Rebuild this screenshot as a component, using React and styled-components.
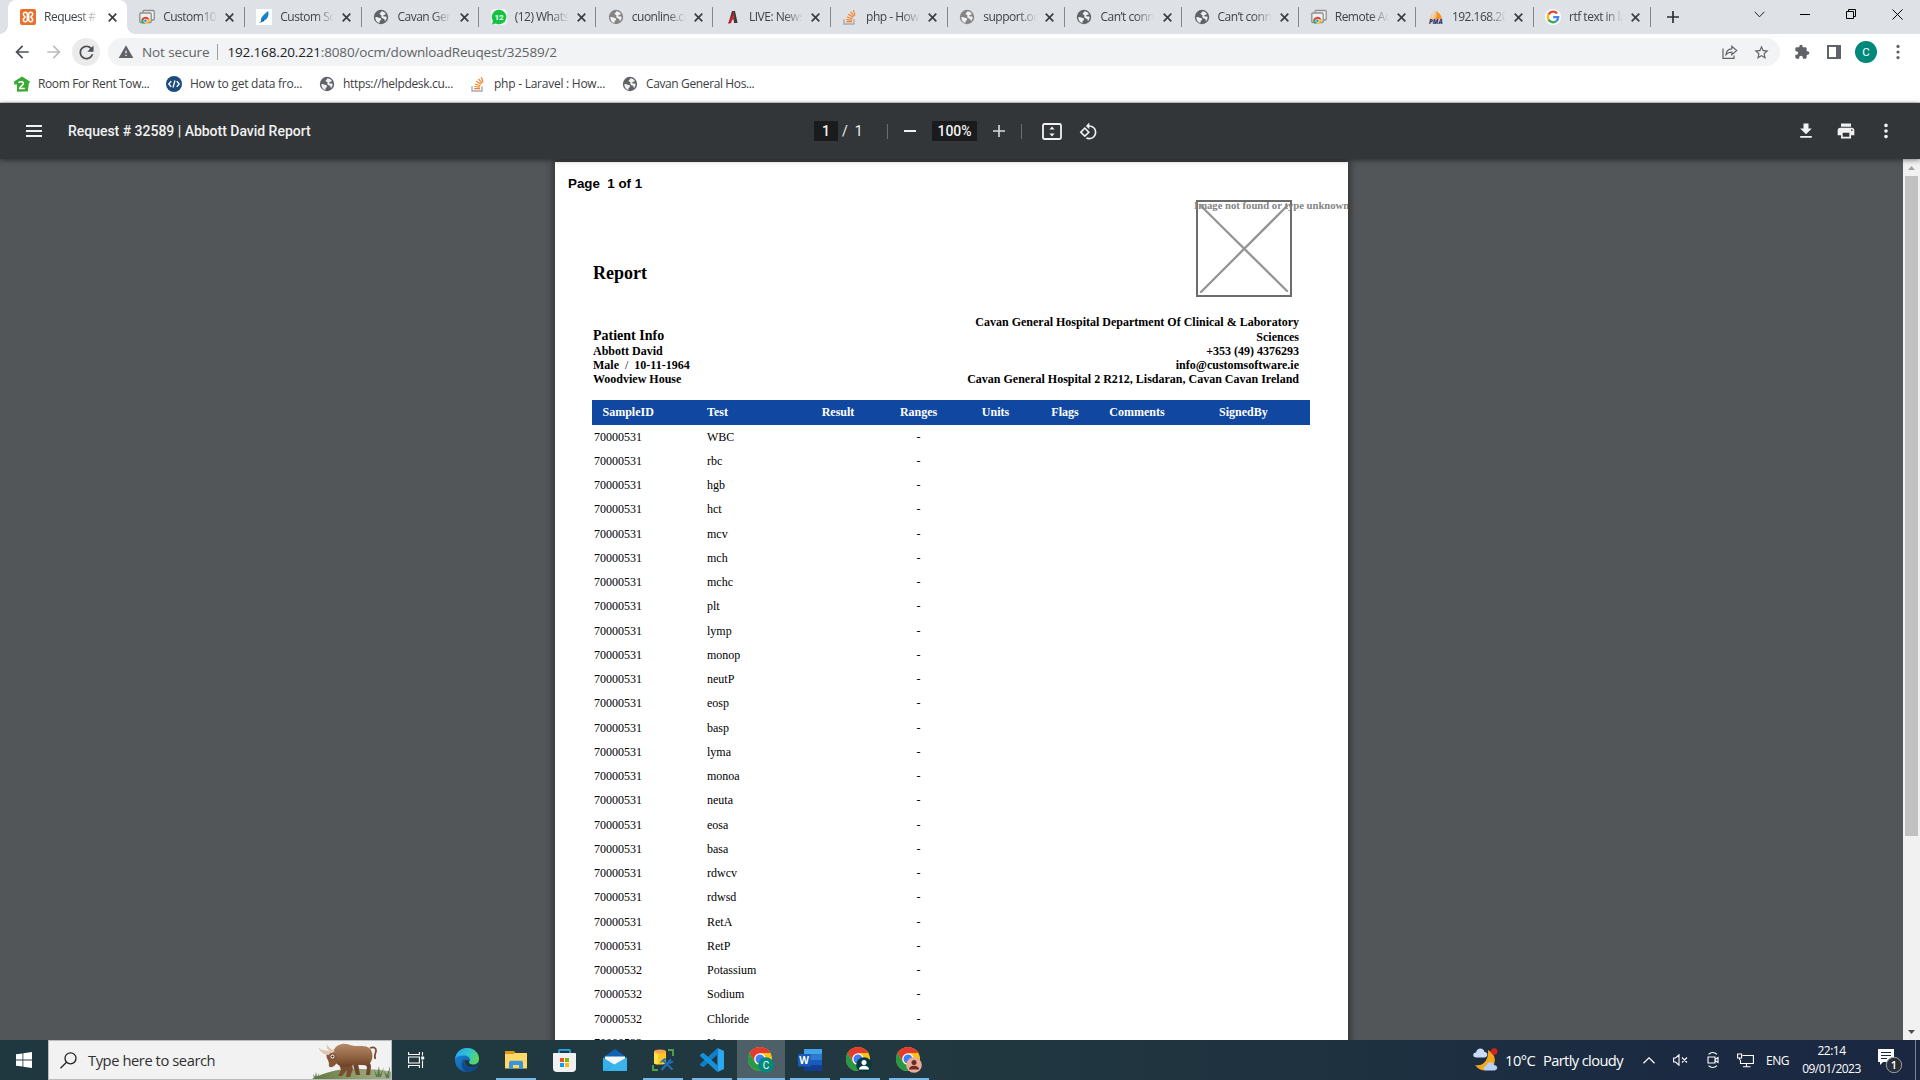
import React from "react";
import styled, { createGlobalStyle, css } from "styled-components";

const Global = createGlobalStyle`
  * { box-sizing: border-box; }
  html, body { margin: 0; padding: 0; overflow: hidden; background: #525659; }
  svg { display: block; flex: none; }
`;

const ui = `"Open Sans", "Noto Sans", sans-serif`;
const serif = `"Liberation Serif", "Times New Roman", serif`;

const Screen = styled.div`
  width: 1920px;
  height: 1080px;
  display: flex;
  flex-direction: column;
  overflow: hidden;
  font-family: ${ui};
`;

/* ---------- browser chrome ---------- */
const TabStrip = styled.div`
  height: 34px;
  flex: none;
  display: flex;
  background: #dee1e6;
  padding-left: 10px;
`;

const Tab = styled.div`
  position: relative;
  width: 117.17px;
  flex: none;
  display: flex;
  align-items: center;
  padding-left: 12px;
  &::after {
    content: "";
    position: absolute;
    right: -0.5px;
    top: 7px;
    width: 1px;
    height: 20px;
    background: ${(p) => (p.$active ? "transparent" : "#84878b")};
  }
  ${(p) =>
    p.$active &&
    css`
      background: #fff;
      border-radius: 8px 8px 0 0;
      margin-left: -2px;
      width: 119.17px;
      &::before {
        content: "";
        position: absolute;
        left: -8px;
        right: -8px;
        bottom: 0;
        height: 8px;
        background: radial-gradient(circle at 0 0, transparent 7.5px, #fff 8px) left / 8px 8px no-repeat,
          radial-gradient(circle at 100% 0, transparent 7.5px, #fff 8px) right / 8px 8px no-repeat;
      }
    `}
`;

const TabTitle = styled.div`
  width: 54px;
  margin-left: 8px;
  overflow: hidden;
  white-space: nowrap;
  font-size: 12px;
  line-height: 18px;
  letter-spacing: -0.5px;
  color: #3f4347;
  -webkit-mask-image: linear-gradient(90deg, #000 66%, transparent 100%);
  mask-image: linear-gradient(90deg, #000 66%, transparent 100%);
`;

const TabClose = styled.div`
  width: 16px;
  margin-left: ${(p) => (p.$active ? 6 : 4.6)}px;
  display: flex;
  justify-content: center;
`;

const NewTab = styled.div`
  width: 46px;
  display: flex;
  align-items: center;
  justify-content: center;
`;

const WindowButtons = styled.div`
  margin-left: auto;
  display: flex;
  height: 28px;
  align-items: center;
`;

const WindowButton = styled.div`
  width: 46px;
  display: flex;
  justify-content: center;
`;

const AddressRow = styled.div`
  height: 36px;
  flex: none;
  display: flex;
  align-items: center;
  background: #fff;
  padding: 0 6px 0 6px;
`;

const NavButton = styled.div`
  width: 32px;
  height: 28px;
  display: flex;
  align-items: center;
  justify-content: center;
`;

const ReloadButton = styled(NavButton)`
  width: 28px;
  margin-left: 2px;
  border-radius: 50%;
  background: #ebebec;
`;

const Omnibox = styled.div`
  width: 1672px;
  flex: none;
  height: 28px;
  margin-left: 8px;
  border-radius: 14px;
  background: #f1f3f4;
  display: flex;
  align-items: center;
  padding: 0 10px;
  color: #5f6368;
  font-size: 13.5px;
  white-space: nowrap;
`;

const NotSecure = styled.span`
  margin-left: 8px;
  width: 67px;
  letter-spacing: -0.1px;
`;

const Divider = styled.span`
  width: 1px;
  height: 16px;
  margin: 0 9.5px 0 8px;
  background: #9b9ea2;
`;

const Url = styled.span`
  letter-spacing: -0.16px;
  b {
    font-weight: 400;
    color: #202124;
  }
`;

const OmniActions = styled.div`
  margin-left: auto;
  display: flex;
  align-items: center;
  gap: 15px;
`;

const ToolActions = styled.div`
  margin-left: auto;
  display: flex;
  align-items: center;
`;

const ToolSlot = styled.div`
  width: 32px;
  display: flex;
  justify-content: center;
`;

const Avatar = styled.div`
  width: 22px;
  height: 22px;
  border-radius: 50%;
  background: #00897b;
  color: #fff;
  font: 400 11.5px/22px Roboto, sans-serif;
  text-align: center;
`;

const BookmarkBar = styled.div`
  height: 33px;
  flex: none;
  display: flex;
  align-items: center;
  background: #fff;
  border-bottom: 1px solid #d5d7d9;
  padding: 0 0 5px 14px;
`;

const Bookmark = styled.div`
  width: ${(p) => p.$w}px;
  display: flex;
  align-items: center;
  gap: 8px;
  font-size: 12px;
  letter-spacing: ${(p) => p.$ls}px;
  color: #3c4043;
  white-space: nowrap;
`;

/* ---------- pdf viewer ---------- */
const PdfToolbar = styled.div`
  position: relative;
  z-index: 2;
  height: 56px;
  flex: none;
  display: grid;
  grid-template-columns: 814px 1fr auto;
  align-items: center;
  background: #323639;
  color: #f1f1f1;
  box-shadow: 0 1px 5px rgba(0, 0, 0, 0.5);
  font: 500 14px/20px Roboto, sans-serif;
`;

const PdfTitle = styled.div`
  display: flex;
  align-items: center;
  padding-left: 26px;
  gap: 26px;
  letter-spacing: -0.02px;
`;

const PdfControls = styled.div`
  display: flex;
  align-items: center;
`;

const DarkField = styled.div`
  width: ${(p) => p.$w}px;
  height: 20px;
  background: #191b1c;
  text-align: center;
  letter-spacing: -0.1px;
`;

const PageTotal = styled.div`
  width: 49px;
  padding-left: 4px;
  font-weight: 400;
  word-spacing: 3.6px;
`;

const PdfDivider = styled.div`
  width: 1px;
  height: 15px;
  background: #6b6e70;
`;

const PdfSlot = styled.div`
  width: ${(p) => p.$w}px;
  display: flex;
  justify-content: center;
`;

const PdfActions = styled.div`
  display: flex;
  align-items: center;
  padding-right: 14px;
`;

const Viewer = styled.div`
  flex: 1;
  min-height: 0;
  display: flex;
  background: #525659;
`;

const Canvas = styled.div`
  flex: 1;
  padding: 3px 0 0 555px;
  overflow: hidden;
`;

const Sheet = styled.div`
  width: 793px;
  height: 1120px;
  background: #fff;
  box-shadow: 0 0 7px 2px rgba(0, 0, 0, 0.42);
  padding: 14px 38px 0 37px;
  overflow: hidden;
  font-family: ${serif};
  color: #000;
`;

const PageNumber = styled.div`
  margin-left: -24px;
  font: bold 13.33px/16px "Liberation Sans", Arial, sans-serif;
  white-space: pre;
`;

const BrandRow = styled.div`
  display: flex;
  justify-content: space-between;
  height: 97px;
  margin-top: 8px;
  padding: 0 18px 0 1px;
`;

const ReportTitle = styled.div`
  padding-top: 63px;
  font-size: 18px;
  line-height: 20px;
  font-weight: bold;
`;

const MissingImage = styled.div`
  position: relative;
  width: 96px;
  height: 97px;
`;

const MissingLabel = styled.div`
  position: absolute;
  left: -2px;
  top: 0;
  font-size: 10.67px;
  line-height: 11px;
  font-weight: bold;
  color: #858585;
  white-space: nowrap;
`;

const InfoRow = styled.div`
  display: flex;
  justify-content: space-between;
  align-items: flex-end;
  margin: 18px 0 14px;
  padding: 0 11px 0 1px;
`;

const InfoBlock = styled.div`
  text-align: ${(p) => p.$align || "left"};
  font-weight: bold;
`;

const InfoHeading = styled.div`
  font-size: 14px;
  line-height: 16px;
`;

const InfoLine = styled.div`
  font-size: 12px;
  line-height: ${(p) => p.$lh || 14}px;
  white-space: pre;
  i {
    font-style: normal;
    font-weight: 400;
  }
`;

const columns = `115px 90px 82px 79.2px 74.6px 64.4px 79.6px 133.2px`;

const TableHead = styled.div`
  width: 718px;
  height: 25px;
  margin-bottom: -0.5px;
  display: grid;
  grid-template-columns: ${columns};
  align-items: center;
  background: #0f47a1;
  color: #fff;
  font-size: 12px;
  font-weight: bold;
`;

const TableRow = styled.div`
  width: 718px;
  height: 24.25px;
  display: grid;
  grid-template-columns: ${columns};
  line-height: 24.25px;
  font-size: 12px;
`;

const Cell = styled.div`
  text-align: ${(p) => (p.$left === undefined ? "center" : "left")};
  padding-left: ${(p) => p.$left || 0}px;
`;

const Scrollbar = styled.div`
  width: 17px;
  display: flex;
  flex-direction: column;
  align-items: center;
  background: #f1f1f1;
`;

const ScrollArrow = styled.div`
  height: 17px;
  display: flex;
  align-items: center;
`;

const Thumb = styled.div`
  width: 13px;
  height: 660px;
  margin-bottom: auto;
  background: #c1c1c1;
`;

/* ---------- taskbar ---------- */
const Taskbar = styled.div`
  height: 40px;
  flex: none;
  display: flex;
  background: linear-gradient(90deg, #1f3840 0%, #213840 48%, #1e323f 68%, #1b2b42 84%, #1b2741 100%);
  color: #fff;
`;

const Start = styled.div`
  width: 48px;
  display: flex;
  align-items: center;
  justify-content: center;
`;

const SearchBox = styled.div`
  width: 344px;
  border: 1px solid #b9bcbd;
  background: #f2f2f2;
  display: flex;
  align-items: center;
  overflow: hidden;
  color: #303030;
  font-size: 14.7px;
  padding-left: 11px;
`;

const SearchHint = styled.div`
  margin-left: 11px;
  width: 225px;
  letter-spacing: -0.42px;
  white-space: nowrap;
`;

const TaskButton = styled.div`
  width: ${(p) => p.$w}px;
  height: 40px;
  display: flex;
  align-items: center;
  justify-content: center;
  background: ${(p) =>
    p.$active
      ? "linear-gradient(#76b9ed, #76b9ed) bottom / 48px 2px no-repeat, #4d6068"
      : p.$open
      ? "linear-gradient(#76b9ed, #76b9ed) bottom / 40px 2px no-repeat"
      : "none"};
`;

const Tray = styled.div`
  margin-left: auto;
  display: flex;
  align-items: center;
  font-size: 14.7px;
`;

const TraySlot = styled.div`
  width: ${(p) => p.$w}px;
  display: flex;
  justify-content: center;
  white-space: nowrap;
`;

const Weather = styled.div`
  display: flex;
  align-items: center;
  width: 159px;
  white-space: nowrap;
`;

const Temp = styled.span`
  width: 38px;
  margin-left: 7px;
  letter-spacing: -0.5px;
`;

const Sky = styled.span`
  letter-spacing: -0.63px;
`;

const Lang = styled.div`
  width: 35px;
  font-size: 12px;
  text-align: center;
  letter-spacing: -0.5px;
`;

const Clock = styled.div`
  width: 72px;
  padding-left: 1px;
  font-size: 12px;
  line-height: 18px;
  text-align: center;
  letter-spacing: -0.5px;
`;

const DesktopEdge = styled.div`
  width: 5px;
  height: 40px;
  border-left: 1px solid #7b8494;
`;

/* ---------- drawings ---------- */
const Glyph = ({ d, size = 20, color = "#5f6368" }) => (
  <svg width={size} height={size} viewBox="0 0 24 24" fill={color}>
    <path d={d} />
  </svg>
);

const paths = {
  back: "M20 11H7.83l5.59-5.59L12 4l-8 8 8 8 1.41-1.41L7.83 13H20v-2z",
  forward: "M12 4l-1.41 1.41L16.17 11H4v2h12.17l-5.58 5.59L12 20l8-8z",
  reload:
    "M17.65 6.35C16.2 4.9 14.21 4 12 4c-4.42 0-7.99 3.58-7.99 8s3.57 8 7.99 8c3.73 0 6.84-2.55 7.73-6h-2.08c-.82 2.33-3.04 4-5.65 4-3.31 0-6-2.69-6-6s2.69-6 6-6c1.66 0 3.14.69 4.22 1.78L13 11h7V4l-2.35 2.35z",
  warning: "M1 21h22L12 2 1 21zm12-3h-2v-2h2v2zm0-4h-2v-4h2v4z",
  puzzle:
    "M20.5 11H19V7c0-1.1-.9-2-2-2h-4V3.5C13 2.12 11.88 1 10.5 1S8 2.12 8 3.5V5H4c-1.1 0-1.99.9-1.99 2v3.8H3.5c1.49 0 2.7 1.21 2.7 2.7s-1.21 2.7-2.7 2.7H2V20c0 1.1.9 2 2 2h3.8v-1.5c0-1.49 1.21-2.7 2.7-2.7 1.49 0 2.7 1.21 2.7 2.7V22H17c1.1 0 2-.9 2-2v-4h1.5c1.38 0 2.5-1.12 2.5-2.5S21.88 11 20.5 11z",
  star:
    "M22 9.24l-7.19-.62L12 2 9.19 8.63 2 9.24l5.46 4.73L5.82 21 12 17.27 18.18 21l-1.63-7.03L22 9.24zM12 15.4l-3.76 2.27 1-4.28-3.32-2.88 4.38-.38L12 6.1l1.71 4.04 4.38.38-3.32 2.88 1 4.28L12 15.4z",
  print:
    "M19 8H5c-1.66 0-3 1.34-3 3v6h4v4h12v-4h4v-6c0-1.66-1.34-3-3-3zm-3 11H8v-5h8v5zm3-7c-.55 0-1-.45-1-1s.45-1 1-1 1 .45 1 1-.45 1-1 1zm-1-9H6v4h12V3z",
  download: "M19 9h-4V3H9v6H5l7 7 7-7zM5 18v2h14v-2H5z",
  rotate:
    "M7.34 6.41L.86 12.9l6.49 6.48 6.49-6.48-6.5-6.49zM3.69 12.9l3.66-3.66L11 12.9l-3.66 3.66-3.65-3.66zm15.67-6.26C17.61 4.88 15.3 4 13 4V.76L8.76 5 13 9.24V6c1.79 0 3.58.68 4.95 2.05 2.73 2.73 2.73 7.17 0 9.9C16.58 19.32 14.79 20 13 20c-.97 0-1.94-.21-2.84-.61l-1.49 1.49C10.02 21.62 11.51 22 13 22c2.3 0 4.61-.88 6.36-2.64 3.52-3.51 3.52-9.21 0-12.72z",
};

const Dots = ({ color, r = 1.6 }) => (
  <svg width="6" height="16" fill={color}>
    <circle cx="3" cy="2.4" r={r} />
    <circle cx="3" cy="8" r={r} />
    <circle cx="3" cy="13.6" r={r} />
  </svg>
);

const Globe = ({ color = "#5f6368" }) => (
  <svg width="16" height="16" viewBox="0 0 16 16">
    <circle cx="8" cy="8" r="7.2" fill={color} />
    <path
      d="M2.3 8.2c1.4-.3 2.5.2 3.6.6 1.2.3 2.3.5 2.2 1.6-.1.9-1.3.9-1.5 1.8-.1.6 0 1.2-.3 1.7C3.9 13.2 2.3 11 2.3 8.2zM8.3 2.2c1.8.1 3.6 1 4.6 2.7-.8.9-1.9.6-2.5 1.3-.5.6.2 1.3 1 1.4.9.1 1.7-.2 2.2.4.1 1.6-.6 3.2-1.7 4.2-.3-1-.1-2-1-2.500-.8-.5-1.9-.3-2.4-1.3-.4-1 .3-1.800-.3-2.400-.6-.5-1.500-.2-1.600-1-.1-1.100 1.700-1.200 1.700-2.800z"
      fill="#fff"
      opacity=".9"
    />
  </svg>
);

const Xampp = () => (
  <svg width="16" height="16" viewBox="0 0 16 16">
    <rect width="16" height="16" rx="2" fill="#e8702a" />
    <path
      d="M5.3 3.3a2 2 0 0 0-1 3.7c1 .4 1 1.6 0 2a2 2 0 1 0 3 1.700V8.600h1.400v2.100a2 2 0 1 0 3-1.700c-1-.4-1-1.600 0-2a2 2 0 1 0-3-1.700v2.100H7.300V5.300a2 2 0 0 0-2-2z"
      fill="none"
      stroke="#fff"
      strokeWidth="1.500"
    />
  </svg>
);

const RemoteDesk = () => (
  <svg width="16" height="16" viewBox="0 0 16 16">
    <rect x="4" y="1.5" width="11.2" height="9.5" rx="1" fill="#f5f5f5" stroke="#8d8d8d" strokeWidth="1.3" />
    <rect x=".8" y="4" width="11.4" height="9.5" rx="1" fill="#eee" stroke="#8d8d8d" strokeWidth="1.3" />
    <path d="M2.2 12a4.2 4.2 0 0 1 8.2-1.2H6.500z" fill="#e33b2e" />
    <path d="M2.3 11.5l1.8-1.8 2.4 4.8H3.2a4 4 0 0 1-.9-3z" fill="#35a853" />
    <path d="M6.5 10.2h4.2a4.5 4.5 0 0 1-2.2 4.4H6z" fill="#fbbc05" />
    <circle cx="6.4" cy="11.8" r="1.7" fill="#4285f4" stroke="#fff" strokeWidth=".7" />
  </svg>
);

const Feather = () => (
  <svg width="16" height="16" viewBox="0 0 16 16">
    <rect width="16" height="16" fill="#fff" />
    <path d="M12.2 2c1 4.500-.4 8-4 9.300L5 12c-.6-4 3-6.300 7.200-10z" fill="#1583c9" />
    <path d="M7.500 10l-4.500 4 5.500-2z" fill="#155e9c" />
  </svg>
);

const WhatsApp = () => (
  <svg width="16" height="16" viewBox="0 0 16 16">
    <rect width="16" height="16" rx="4" fill="#f3f6f3" />
    <path d="M8 .8a7.2 7.2 0 1 1-3.2 13.6L1 15.4l1-3.5A7.2 7.2 0 0 1 8 .8z" fill="#11c243" />
    <text x="8" y="11" fontSize="8" fontWeight="700" fontFamily="Roboto, sans-serif" textAnchor="middle" fill="#fff">
      12
    </text>
  </svg>
);

const RedA = () => (
  <svg width="16" height="16" viewBox="0 0 16 16">
    <path d="M7 2h3l2.600 12H9L8.300 6 6 14H3.500z" fill="#3b3b3f" />
    <path d="M9.400 1.500L3 14.500h2.300l2-4 2 .2V8.600H8.200z" fill="#d71920" />
  </svg>
);

const StackOverflow = () => (
  <svg width="16" height="16" viewBox="0 0 16 16" fill="none">
    <path d="M2 10.3v4.7h10v-4.7" stroke="#a9abae" strokeWidth="1.4" />
    <path
      d="M4.2 12.7h5.8M4.3 10.5l5.7.7M4.9 8l5.5 1.7M6.3 5.2l4.8 3M8.5 2.8l3.6 4.5M11.4 1.2l1.6 5.3"
      stroke="#f48024"
      strokeWidth="1.2"
    />
  </svg>
);

const PhpMyAdmin = () => (
  <svg width="16" height="16" viewBox="0 0 17 16">
    <path d="M4.5 2c.8 2.8.4 5.6-1.8 8H1C3 7.6 4.3 5 4.500 2zM7 1c2.500 2.500 2.300 6.200.4 9H3.500C6 7.300 7.200 4.300 7 1z" fill="#f9c385" />
    <path d="M8.500 1.500c4 1.700 5.600 5.300 6.500 8.700H7.500c1.700-2.700 2-5.600 1-8.700z" fill="#f7941d" />
    <text x="8.3" y="15.6" fontSize="6.6" fontWeight="800" fontStyle="italic" fontFamily="Open Sans, sans-serif" textAnchor="middle" fill="#34346b">
      PMA
    </text>
  </svg>
);

const Google = () => (
  <svg width="16" height="16" viewBox="0 0 16 16">
    <circle cx="8" cy="8" r="8" fill="#fff" />
    <g fill="none" strokeWidth="2.3">
      <path d="M12.1 4.6A5.2 5.2 0 0 0 3.5 5.4" stroke="#ea4335" />
      <path d="M3.5 5.4a5.2 5.2 0 0 0 0 5.2" stroke="#fbbc05" />
      <path d="M3.5 10.6a5.2 5.2 0 0 0 7.9 1.5" stroke="#34a853" />
      <path d="M11.4 12.1A5 5 0 0 0 13.2 8.2H8.2" stroke="#4285f4" />
    </g>
  </svg>
);

const HouseMark = () => (
  <svg width="16" height="16" viewBox="0 0 16 16">
    <path d="M8 .5L16 5.500l-1.200 2.300-1 7.700H9.500l-6.500.2V8.500L.3 8.600 0 5.500z" fill="#3aa935" />
    <path d="M4.500 6.800c2-1.800 5.200-1.200 4.800 1-.3 1.700-3 2.100-3.500 4.700h5" fill="none" stroke="#fff" strokeWidth="1.500" />
  </svg>
);

const CodeMark = () => (
  <svg width="16" height="16" viewBox="0 0 16 16">
    <circle cx="8" cy="8" r="8" fill="#1d4b7d" />
    <path d="M5.3 5.3L2.700 8l2.600 2.700M10.700 5.300L13.300 8l-2.600 2.700M9 4.500L7 11.500" fill="none" stroke="#fff" strokeWidth="1.3" />
  </svg>
);

const Cross = () => (
  <svg width="9" height="9" viewBox="0 0 9 9">
    <path d="M.7.7l7.600 7.600M8.300.7L.7 8.300" stroke="#3c4043" strokeWidth="1.700" />
  </svg>
);

const Share = () => (
  <svg width="16" height="16" viewBox="0 0 16 16" fill="none" stroke="#5f6368" strokeWidth="1.2">
    <path d="M1 4.5v9.9h11v-3" />
    <path d="M4 10.7c.3-3.7 2.3-5.7 5.8-5.9V2.2l4.9 4.3-4.900 4.200V8.100C7.500 8.100 5.500 8.900 4 10.700z" />
  </svg>
);

const SidePanel = () => (
  <svg width="14" height="14" fill="#5f6368">
    <path d="M0 0h14v14H0zM2 2v10h7V2z" fillRule="evenodd" />
  </svg>
);

const FitPage = () => (
  <svg width="20" height="17" viewBox="0 0 20 17">
    <rect x="1" y="1" width="18" height="15" rx="1.5" fill="none" stroke="#f1f1f1" strokeWidth="1.8" />
    <path d="M10 3.6l2.600 3H7.400zM10 13.400l2.600-3H7.400z" fill="#f1f1f1" />
  </svg>
);

const WindowsLogo = () => (
  <svg width="16" height="16" viewBox="0 0 16 16" fill="#fff">
    <path d="M0 2.3L6.500 1.400v6.200H0zM7.300 1.300L16 0v7.600H7.300zM0 8.400h6.500v6.200L0 13.700zM7.300 8.400H16V16l-8.700-1.300z" />
  </svg>
);

const Bull = () => (
  <svg width="79" height="38" viewBox="0 0 79 38">
    <defs>
      <linearGradient id="hill" x1="0" x2="1">
        <stop offset="0" stopColor="#5f7440" />
        <stop offset=".5" stopColor="#8b9c68" />
        <stop offset="1" stopColor="#a2ae8c" />
      </linearGradient>
      <linearGradient id="hide" x1="0" y1="0" x2="0" y2="1">
        <stop offset="0" stopColor="#b58a66" />
        <stop offset=".6" stopColor="#8e6140" />
        <stop offset="1" stopColor="#6b4128" />
      </linearGradient>
    </defs>
    <path d="M0 38C14 30 32 27 50 28c12 0 22 1 30 3v7z" fill="url(#hill)" />
    <path d="M58 7c5-2 7 1 5.500 5-1 3-1.500 4 0 6" fill="none" stroke="#7a4d32" strokeWidth="1.700" />
    <path d="M46 22l2 12h-4l-3-10zM57 19l2 6-1 9h-4l1-8-5-6z" fill="#70452b" />
    <path d="M27 23l2 6-3 6h4l5-6 1-5zM34 23l1 6-1 7h4l3-8-1-5z" fill="#7a4d31" />
    <path d="M18 17c2-6 5-13 12-14 5-1 8 2 13 2 7 0 13-1 16 4 3 6 1 12-3 15-6 1-12-2-18 1-5 2-11 0-13-2z" fill="url(#hide)" />
    <path d="M15 13c4-3 9 0 10 4 1 5-2 8-5 9-2 1-4-1-3-3 0-4-4-7-2-10z" fill="#865637" />
    <path d="M17 14C12 14 8 11 6.500 6.500 10 10 14 9 19 11zM20 12c-4-2-6-5-5-9 1 4 5 5 8 7z" fill="#dfc5b2" />
    <circle cx="20.5" cy="15.5" r="1.9" fill="#fff" />
    <circle cx="20.5" cy="15.5" r="1.1" fill="#222" />
    <path d="M2 38l-1-5 2 3 1-5 1 5 2-4-1 6zM64 36l-2-8 3 6 2-9 1 9 4-8-3 10zM74 37l-2-7 3 4 3-9-1 12z" fill="#5c7a4a" />
  </svg>
);

const TaskView = () => (
  <svg width="17" height="16" viewBox="0 0 17 16" fill="none" stroke="#fff" strokeWidth="1.1">
    <path d="M.6 0v2.500h10.800V0M.6 16v-2.500h10.800V16M.6 5h10.800v6H.6zM14.500 0v3.500M14.500 8.500V16" />
    <rect x="13.2" y="4.5" width="3" height="3" fill="#fff" stroke="none" />
  </svg>
);

const Edge = () => (
  <svg width="24" height="24" viewBox="0 0 24 24">
    <defs>
      <linearGradient id="edgeTop" x1="0" y1=".3" x2="1" y2=".6">
        <stop offset="0" stopColor="#2aa9e8" />
        <stop offset=".5" stopColor="#2fc2d4" />
        <stop offset="1" stopColor="#62d84e" />
      </linearGradient>
      <linearGradient id="edgeLow" x1="0" y1="0" x2="1" y2="1">
        <stop offset="0" stopColor="#1b8ad8" />
        <stop offset="1" stopColor="#0d4e9c" />
      </linearGradient>
    </defs>
    <circle cx="12" cy="12" r="12" fill="url(#edgeLow)" />
    <path d="M.2 10.5C1 4.500 6 0 12 0c7 0 12 5 12 10.500 0 4-3 6-6 6-2.800 0-4-1-4-2 0-.8 1-1.200 1-2.800 0-2.400-2.600-4.300-6-4.300C5 7.400 1.500 8.500.2 10.500z" fill="url(#edgeTop)" />
    <path d="M9.500 10.500C7 15 10.500 19.500 15 19.500c3.500 0 5.500-1 7.300-1.800.6-.2.9.2.5.8A12 12 0 0 1 13 24c-6-.5-8.500-9-3.500-13.500z" fill="#114a8b" />
    <path d="M14.200 12.300c-.5 1-.8 3 1.500 4 3 1.200 6 .3 7.500-1.600l-.4 2.500c-2 1.300-5 2.300-8 2-4-.6-6-4-5.300-7.200z" fill="#203840" />
  </svg>
);

const Explorer = () => (
  <svg width="22" height="18" viewBox="0 0 22 18">
    <path d="M0 0h9l1.500 2H22v5H0z" fill="#d99b13" />
    <path d="M0 3h8.500l1.500-1H22v15.500H0z" fill="#ffd866" />
    <path d="M4 18v-6.500C4 10.300 5 9.800 6 9.800h10c1 0 2 .5 2 1.700V18h-4v-4H8v4z" fill="#3a93dd" />
  </svg>
);

const Store = () => (
  <svg width="23" height="23" viewBox="0 0 23 23">
    <path d="M6 5V1.800C6 1 6.500.8 7.200.8h8.600c.7 0 1.200.2 1.200 1V5" fill="none" stroke="#29a8e8" strokeWidth="1.7" />
    <path d="M0 5c0-.6.3-1 1-1h21c.7 0 1 .4 1 1v14a4 4 0 0 1-4 4H4a4 4 0 0 1-4-4z" fill="#f1f1f2" />
    <path d="M7 9h4v4H7z" fill="#f25022" />
    <path d="M12 9h4v4h-4z" fill="#7fba00" />
    <path d="M7 14h4v4H7z" fill="#00a4ef" />
    <path d="M12 14h4v4h-4z" fill="#ffb900" />
  </svg>
);

const Mail = () => (
  <svg width="24" height="22" viewBox="0 0 24 22">
    <path d="M12 0l12 8.500H0z" fill="#0f61b5" />
    <path d="M2 7.500h20V16H2z" fill="#f3f5f7" />
    <path d="M0 8.500L12 16l12-7.500V22H0z" fill="#33b3ee" />
    <path d="M24 8.500V22H0z" fill="#1f9ae0" />
    <path d="M12 15L24 8.500V22H2z" fill="#50c9f5" opacity=".55" />
  </svg>
);

const Ssms = () => (
  <svg width="22" height="22" viewBox="0 0 22 22">
    <path d="M2 2v12c0 2 12 2 12 0V2z" fill="#ffc91f" />
    <path d="M2 2v12c0 .8 2 1.300 4 1.400V2z" fill="#ffe14d" />
    <ellipse cx="8" cy="2.5" rx="6" ry="2" fill="#f5a54c" />
    <path d="M16 1h5v6M1 16v5h5" fill="none" stroke="#4fa447" strokeWidth="1.9" />
    <path d="M10.500 11l10 9.500M19 10.500l-9.500 10.500" stroke="#1e70b8" strokeWidth="2.2" />
    <path d="M8.500 13.500l4-3.500 1.500 1M21 12.500l-3 1.500-1-3" stroke="#1e70b8" strokeWidth="1.6" fill="none" />
  </svg>
);

const VsCode = () => (
  <svg width="24" height="24" viewBox="0 0 24 24">
    <path d="M17.500 0L24 3v18l-6.500 3z" fill="#2aa9f2" />
    <path d="M17.500 0v6.500L4 18.700 2.500 19 .3 17.200c-.4-.4-.4-1 0-1.400z" fill="#0e7fc8" />
    <path d="M17.500 24v-6.500L4 5.300 2.500 5 .3 6.800c-.4.4-.4 1 0 1.400z" fill="#1592dc" />
  </svg>
);

const Chrome = ({ badge }) => (
  <svg width="27" height="26" viewBox="0 0 27 26">
    <circle cx="12" cy="12" r="12" fill="#fbc116" />
    <path d="M12 0a12 12 0 0 1 10.400 6H12L6.800 15 1.600 6A12 12 0 0 1 12 0z" fill="#e33b2e" />
    <path d="M1.600 6l5.200 9a6 6 0 0 0 5.200 3h5.200L12 24A12 12 0 0 1 1.600 6z" fill="#279847" />
    <circle cx="12" cy="12" r="5.8" fill="#fff" />
    <circle cx="12" cy="12" r="4.5" fill="#3f7ff0" />
    {badge === "C" && (
      <>
        <circle cx="18" cy="18" r="7.8" fill="#00897b" />
        <text x="18" y="21.8" fontSize="10" fontFamily="Roboto, sans-serif" textAnchor="middle" fill="#fff">
          C
        </text>
      </>
    )}
    {badge === "dark" && (
      <>
        <circle cx="18" cy="18" r="7.8" fill="#063a40" />
        <circle cx="18" cy="15.5" r="2.5" fill="#fff" />
        <path d="M13 22.500c0-5 10-5 10 0z" fill="#fff" />
      </>
    )}
    {badge === "pink" && (
      <>
        <circle cx="18" cy="18" r="7.8" fill="#e9ab9b" />
        <circle cx="18" cy="15.5" r="2.5" fill="#6b2c22" />
        <path d="M13 22.500c0-5 10-5 10 0z" fill="#6b2c22" />
      </>
    )}
  </svg>
);

const Word = () => (
  <svg width="24" height="22" viewBox="0 0 24 22">
    <path d="M6 0h18v5.500H6z" fill="#41a5ee" />
    <path d="M6 5.500h18V11H6z" fill="#2b7cd3" />
    <path d="M6 11h18v5.500H6z" fill="#185abd" />
    <path d="M6 16.500h18V22H6z" fill="#103f91" />
    <rect y="5" width="12.5" height="12.5" rx="1" fill="#185abd" />
    <text x="6.2" y="15" fontSize="10" fontWeight="700" fontFamily="Open Sans, sans-serif" textAnchor="middle" fill="#fff">
      W
    </text>
  </svg>
);

const WeatherIcon = () => (
  <svg width="25" height="24" viewBox="0 0 25 24">
    <path d="M15 2c8 4 9 13 3 18-5 4-12 3-16-3 8 2 14-5 13-15z" fill="#f6a81c" />
    <path d="M3.500 9.500C-1 9.500-.5 4.500 3 4.500 4-1 11-.5 11.500 4c4 0 3.500 5.500 0 5.500z" fill="#c9dcf8" />
    <path d="M13.500 22.500c-4 0-3.500-4.500 0-5 1-4.500 7-4 7.500-.5 4 0 4.500 5.500 0 5.500z" fill="#b9d0f5" />
    <circle cx="21.2" cy="3.5" r="3.2" fill="#d0261c" />
  </svg>
);

const Mute = () => (
  <svg width="15" height="12" viewBox="0 0 15 12" fill="none" stroke="#fff" strokeWidth="1.1">
    <path d="M.6 4h2L6 .8v10.400L2.600 8h-2zM9 3.500l5 5M14 3.500l-5 5" />
  </svg>
);

const Meet = () => (
  <svg width="12" height="16" viewBox="0 0 12 16" fill="none" stroke="#fff" strokeWidth="1.1">
    <path d="M1.500 2.300C4 0 7.500 0 10 2.300M1.500 13.700c2.500 2.300 6 2.300 8.500 0M1 5h7v6H1zM8 7.500l3-2v5l-3-2" />
  </svg>
);

const Network = () => (
  <svg width="17" height="15" viewBox="0 0 17 15" fill="none" stroke="#fff" strokeWidth="1.1">
    <path d="M5.500 2.500h10.900v8H3.500V7M9.500 10.500v3M6 13.800h7.500M.6 1h4v4h-4zM2.600 5v2" />
  </svg>
);

const ActionCenter = () => (
  <svg width="26" height="26" viewBox="0 0 26 26">
    <path d="M0 2h16v13H5l-3 3v-3H0z" fill="#fff" />
    <path d="M3 5.500h10M3 8.500h10M3 11.500h6" stroke="#1b2a42" strokeWidth="1" />
    <circle cx="16" cy="18" r="7.7" fill="#2b2f38" stroke="#9a9da3" strokeWidth="1" />
    <text x="15.8" y="21.8" fontSize="11" fontWeight="600" fontFamily="Open Sans, sans-serif" textAnchor="middle" fill="#fff">
      1
    </text>
  </svg>
);

/* ---------- data ---------- */
const tabs = [
  [<Xampp />, "Request # 32589"],
  [<RemoteDesk />, "Custom10 - Remote"],
  [<Feather />, "Custom Software"],
  [<Globe />, "Cavan General"],
  [<WhatsApp />, "(12) WhatsApp"],
  [<Globe color="#858585" />, "cuonline.cuonline"],
  [<RedA />, "LIVE: News"],
  [<StackOverflow />, "php - How to"],
  [<Globe color="#858585" />, "support.ocm"],
  [<Globe />, "Can’t connect"],
  [<Globe />, "Can’t connect"],
  [<RemoteDesk />, "Remote Access"],
  [<PhpMyAdmin />, "192.168.20.221"],
  [<Google />, "rtf text in laravel"],
];

const bookmarks = [
  [<HouseMark />, "Room For Rent Tow...", 152, -0.38],
  [<CodeMark />, "How to get data fro...", 153, -0.24],
  [<Globe />, "https://helpdesk.cu...", 151, -0.33],
  [<StackOverflow />, "php - Laravel : How...", 152, -0.25],
  [<Globe />, "Cavan General Hos...", 150, -0.38],
];

const rows = [
  ..."WBC rbc hgb hct mcv mch mchc plt lymp monop neutP eosp basp lyma monoa neuta eosa basa rdwcv rdwsd RetA RetP"
    .split(" ")
    .map((t) => ["70000531", t]),
  ..."Potassium Sodium Chloride Urea".split(" ").map((t) => ["70000532", t]),
];

const headings = ["Result", "Ranges", "Units", "Flags", "Comments", "SignedBy"];

export default function App() {
  return (
    <Screen>
      <Global />
      <TabStrip>
        {tabs.map(([icon, title], i) => (
          <Tab key={i} $active={i === 0}>
            {icon}
            <TabTitle>{title}</TabTitle>
            <TabClose $active={i === 0}>
              <Cross />
            </TabClose>
          </Tab>
        ))}
        <NewTab>
          <svg width="12" height="12">
            <path d="M6 0v12M0 6h12" stroke="#303235" strokeWidth="1.7" />
          </svg>
        </NewTab>
        <WindowButtons>
          <WindowButton>
            <svg width="11" height="7" fill="none" stroke="#222">
              <path d="M.7.8l4.800 5 4.800-5" />
            </svg>
          </WindowButton>
          <WindowButton>
            <svg width="10" height="1">
              <path d="M0 .5h10" stroke="#000" />
            </svg>
          </WindowButton>
          <WindowButton>
            <svg width="10" height="10" fill="none" stroke="#000">
              <path d="M.5 2.500h7v7h-7zM2.500 2.500v-2h7v7h-2" />
            </svg>
          </WindowButton>
          <WindowButton>
            <svg width="11" height="11" fill="none" stroke="#000">
              <path d="M.5.5l10 10M10.500.5l-10 10" />
            </svg>
          </WindowButton>
        </WindowButtons>
      </TabStrip>

      <AddressRow>
        <NavButton>
          <Glyph d={paths.back} color="#4c5054" />
        </NavButton>
        <NavButton>
          <Glyph d={paths.forward} color="#babcbe" />
        </NavButton>
        <ReloadButton>
          <Glyph d={paths.reload} color="#4c5054" size={21} />
        </ReloadButton>
        <Omnibox>
          <Glyph d={paths.warning} size={16} />
          <NotSecure>Not secure</NotSecure>
          <Divider />
          <Url>
            <b>192.168.20.221</b>:8080/ocm/downloadReuqest/32589/2
          </Url>
          <OmniActions>
            <Share />
            <Glyph d={paths.star} size={17} />
          </OmniActions>
        </Omnibox>
        <ToolActions>
          <ToolSlot>
            <Glyph d={paths.puzzle} size={16} />
          </ToolSlot>
          <ToolSlot>
            <SidePanel />
          </ToolSlot>
          <ToolSlot>
            <Avatar>C</Avatar>
          </ToolSlot>
          <ToolSlot>
            <Dots color="#5f6368" />
          </ToolSlot>
        </ToolActions>
      </AddressRow>

      <BookmarkBar>
        {bookmarks.map(([icon, label, w, ls]) => (
          <Bookmark key={label} $w={w} $ls={ls}>
            {icon}
            {label}
          </Bookmark>
        ))}
      </BookmarkBar>

      <PdfToolbar>
        <PdfTitle>
          <svg width="16" height="12">
            <path d="M0 1h16M0 6h16M0 11h16" stroke="#f1f1f1" strokeWidth="2" />
          </svg>
          Request # 32589 | Abbott David Report
        </PdfTitle>
        <PdfControls>
          <DarkField $w={24}>1</DarkField>
          <PageTotal>/ 1</PageTotal>
          <PdfDivider />
          <PdfSlot $w={44}>
            <svg width="12" height="2">
              <path d="M0 1h12" stroke="#f1f1f1" strokeWidth="2" />
            </svg>
          </PdfSlot>
          <DarkField $w={45}>100%</DarkField>
          <PdfSlot $w={44}>
            <svg width="12" height="12">
              <path d="M6 0v12M0 6h12" stroke="#dcdcdc" strokeWidth="1.6" />
            </svg>
          </PdfSlot>
          <PdfDivider />
          <PdfSlot $w={60}>
            <FitPage />
          </PdfSlot>
          <PdfSlot $w={12}>
            <Glyph d={paths.rotate} color="#f1f1f1" size={19} />
          </PdfSlot>
        </PdfControls>
        <PdfActions>
          <PdfSlot $w={40}>
            <Glyph d={paths.download} color="#f1f1f1" size={20} />
          </PdfSlot>
          <PdfSlot $w={40}>
            <Glyph d={paths.print} color="#f1f1f1" size={20} />
          </PdfSlot>
          <PdfSlot $w={40}>
            <Dots color="#f1f1f1" r={1.8} />
          </PdfSlot>
        </PdfActions>
      </PdfToolbar>

      <Viewer>
        <Canvas>
          <Sheet>
            <PageNumber>Page  1 of 1</PageNumber>
            <BrandRow>
              <ReportTitle>Report</ReportTitle>
              <MissingImage>
                <MissingLabel>Image not found or type unknown</MissingLabel>
                <svg width="96" height="97" viewBox="0 0 96 97" fill="none">
                  <rect x="1" y="1" width="94" height="95" stroke="#6c6c6c" strokeWidth="2" />
                  <path d="M5 6l86 85M91 6L5 92" stroke="#959595" strokeWidth="2.3" strokeLinecap="round" />
                </svg>
              </MissingImage>
            </BrandRow>
            <InfoRow>
              <InfoBlock>
                <InfoHeading>Patient Info</InfoHeading>
                <InfoLine>Abbott David</InfoLine>
                <InfoLine>
                  Male  <i>/</i>  10-11-1964
                </InfoLine>
                <InfoLine>Woodview House</InfoLine>
              </InfoBlock>
              <InfoBlock $align="right">
                <InfoLine $lh={15}>Cavan General Hospital Department Of Clinical &amp; Laboratory</InfoLine>
                <InfoLine>Sciences</InfoLine>
                <InfoLine>+353 (49) 4376293</InfoLine>
                <InfoLine>info@customsoftware.ie</InfoLine>
                <InfoLine>Cavan General Hospital 2 R212, Lisdaran, Cavan Cavan Ireland</InfoLine>
              </InfoBlock>
            </InfoRow>
            <TableHead>
              <Cell $left={10.5}>SampleID</Cell>
              <Cell $left={0}>Test</Cell>
              {headings.map((h) => (
                <Cell key={h}>{h}</Cell>
              ))}
            </TableHead>
            {rows.map(([id, test]) => (
              <TableRow key={test}>
                <Cell $left={2}>{id}</Cell>
                <Cell $left={0}>{test}</Cell>
                <Cell />
                <Cell>-</Cell>
              </TableRow>
            ))}
          </Sheet>
        </Canvas>
        <Scrollbar>
          <ScrollArrow>
            <svg width="7" height="4">
              <path d="M0 4l3.500-4L7 4z" fill="#a3a3a3" />
            </svg>
          </ScrollArrow>
          <Thumb />
          <ScrollArrow>
            <svg width="7" height="4">
              <path d="M0 0l3.500 4L7 0z" fill="#505050" />
            </svg>
          </ScrollArrow>
        </Scrollbar>
      </Viewer>

      <Taskbar>
        <Start>
          <WindowsLogo />
        </Start>
        <SearchBox>
          <svg width="17" height="17" viewBox="0 0 17 17" fill="none" stroke="#222" strokeWidth="1.3">
            <circle cx="10.5" cy="6.3" r="5.5" />
            <path d="M6.500 10.300L.5 16.300" />
          </svg>
          <SearchHint>Type here to search</SearchHint>
          <Bull />
        </SearchBox>
        <TaskButton $w={48}>
          <TaskView />
        </TaskButton>
        <TaskButton $w={54}>
          <Edge />
        </TaskButton>
        <TaskButton $w={44} $open>
          <Explorer />
        </TaskButton>
        <TaskButton $w={53}>
          <Store />
        </TaskButton>
        <TaskButton $w={47}>
          <Mail />
        </TaskButton>
        <TaskButton $w={49} $open>
          <Ssms />
        </TaskButton>
        <TaskButton $w={50} $open>
          <VsCode />
        </TaskButton>
        <TaskButton $w={48} $active>
          <Chrome badge="C" />
        </TaskButton>
        <TaskButton $w={50} $open>
          <Word />
        </TaskButton>
        <TaskButton $w={49} $open>
          <Chrome badge="dark" />
        </TaskButton>
        <TaskButton $w={50} $open>
          <Chrome badge="pink" />
        </TaskButton>
        <Tray>
          <Weather>
            <WeatherIcon />
            <Temp>10°C</Temp>
            <Sky>Partly cloudy</Sky>
          </Weather>
          <TraySlot $w={34}>
            <svg width="12" height="7" fill="none" stroke="#fff" strokeWidth="1.2">
              <path d="M.5 6.200L6 .8l5.500 5.400" />
            </svg>
          </TraySlot>
          <TraySlot $w={29}>
            <Mute />
          </TraySlot>
          <TraySlot $w={36}>
            <Meet />
          </TraySlot>
          <TraySlot $w={29}>
            <Network />
          </TraySlot>
          <Lang>ENG</Lang>
          <Clock>
            22:14
            <br />
            09/01/2023
          </Clock>
          <TraySlot $w={48}>
            <ActionCenter />
          </TraySlot>
          <DesktopEdge />
        </Tray>
      </Taskbar>
    </Screen>
  );
}
